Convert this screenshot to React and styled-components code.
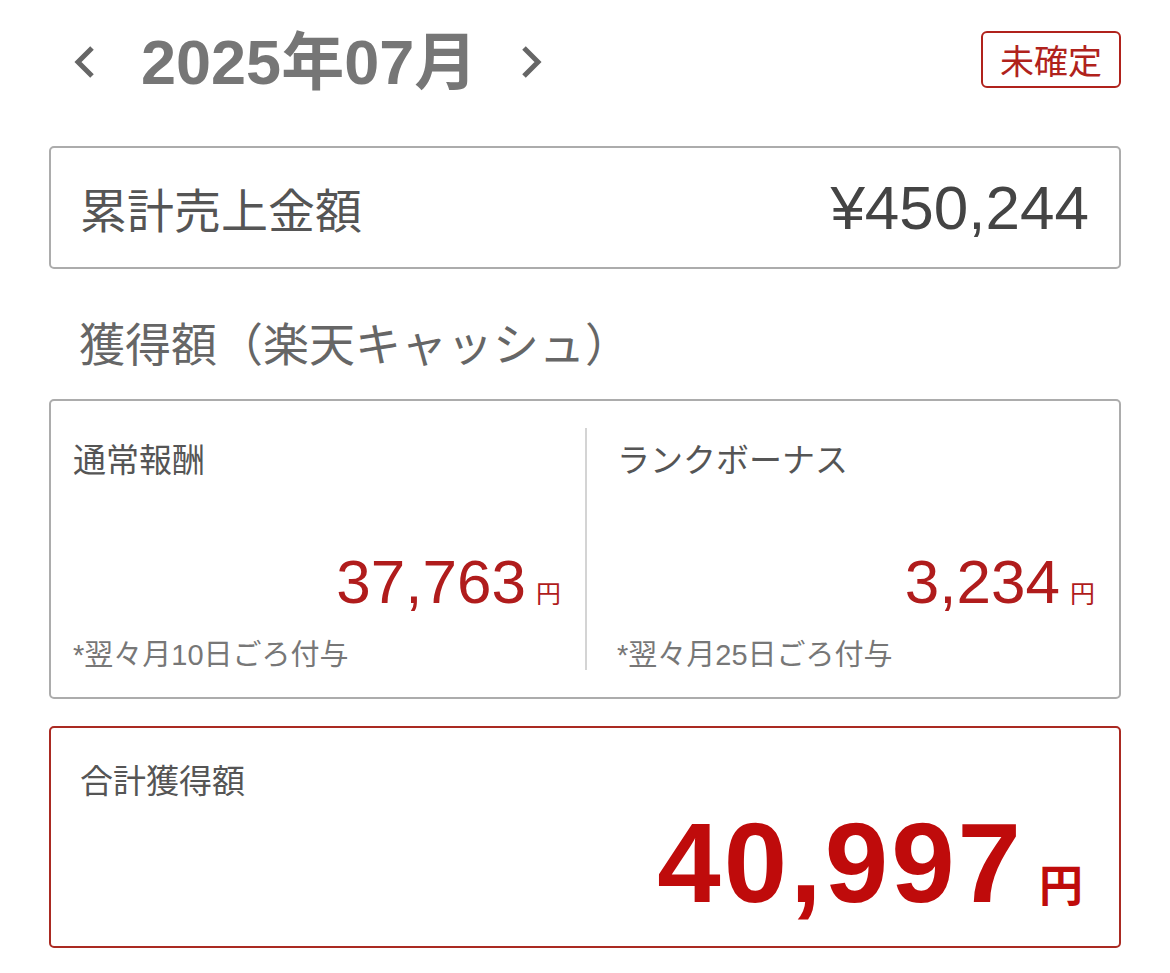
import styled, { createGlobalStyle } from "styled-components";

const GlobalStyle = createGlobalStyle`
  body {
    margin: 0;
    background: #fff;
    font-family: "Liberation Sans", "Noto Sans CJK JP", sans-serif;
  }
`;

const Page = styled.div`
  width: 1170px;
  padding: 0 49px;
  box-sizing: border-box;
`;

const Header = styled.div`
  display: flex;
  align-items: center;
  height: 57px;
  padding-top: 31px;
  padding-left: 24px;
`;

const Chevron = styled.button`
  display: flex;
  align-items: center;
  justify-content: center;
  background: none;
  border: 0;
  padding: 0;
  width: 24px;
  height: 36px;
  margin-top: 4px;
  cursor: pointer;
`;

const MonthTitle = styled.h1`
  margin: 6px 42px 0 44px;
  font-size: 63px;
  line-height: 1;
  font-weight: 700;
  color: #767676;
`;

const Badge = styled.div`
  margin-left: auto;
  width: 140px;
  height: 57px;
  box-sizing: border-box;
  border: 2px solid #b0221c;
  border-radius: 6px;
  display: flex;
  align-items: center;
  justify-content: center;
  color: #b0221c;
  font-size: 34px;
`;

const Card = styled.div`
  border: 2px solid ${(p) => (p.$accent ? "#aa2a22" : "#acacac")};
  border-radius: 5px;
  box-sizing: border-box;
`;

const SalesCard = styled(Card)`
  margin-top: 58px;
  height: 123px;
  display: flex;
  align-items: center;
  justify-content: space-between;
  padding: 0 30px 0 29px;
`;

const SalesLabel = styled.span`
  font-size: 47px;
  color: #555;
`;

const SalesValue = styled.span`
  font-size: 62px;
  color: #444;
`;

const SectionTitle = styled.h2`
  margin: 53px 0 31px 30px;
  font-size: 46px;
  line-height: 1;
  font-weight: 400;
  color: #666;
`;

const SplitCard = styled(Card)`
  height: 300px;
  display: grid;
  grid-template-columns: 534px 1fr;
  padding: 27px 0;
`;

const Column = styled.div`
  display: flex;
  flex-direction: column;
  padding: 0 ${(p) => p.$right}px 0 ${(p) => p.$left}px;
  border-left: ${(p) => (p.$divider ? "2px solid #d4d4d4" : "none")};
`;

const ItemLabel = styled.div`
  margin-top: ${(p) => (p.$flush ? 0 : 16)}px;
  font-size: 33px;
  line-height: 1;
  color: #555;
`;

const Amount = styled.div`
  margin-top: auto;
  display: flex;
  align-items: baseline;
  justify-content: flex-end;
  color: #b01c1c;
`;

const AmountNumber = styled.span`
  font-size: 62px;
  line-height: 1;
`;

const Yen = styled.span`
  font-size: 25px;
  line-height: 1;
  margin-left: 10px;
`;

const Note = styled.div`
  margin-top: 28px;
  font-size: 29px;
  line-height: 1;
  color: #777;
`;

const TotalCard = styled(Card)`
  margin-top: 27px;
  height: 222px;
  display: flex;
  flex-direction: column;
  padding: 37px 36px 26px 29px;
`;

const TotalNumber = styled.span`
  font-size: 114px;
  line-height: 1;
  font-weight: 700;
  letter-spacing: 3px;
  color: #bf0b0b;
`;

const TotalYen = styled.span`
  font-size: 44px;
  line-height: 1;
  font-weight: 700;
  color: #bf0b0b;
  margin-left: 15px;
`;

const ChevronIcon = ({ dir }) => (
  <svg width="24" height="36" viewBox="0 0 24 36">
    <polyline
      points={dir === "left" ? "19,4 5,18 19,32" : "5,4 19,18 5,32"}
      fill="none"
      stroke="#666"
      strokeWidth="5"
    />
  </svg>
);

const items = [
  { label: "通常報酬", amount: "37,763", note: "*翌々月10日ごろ付与", left: 22, right: 24 },
  { label: "ランクボーナス", amount: "3,234", note: "*翌々月25日ごろ付与", left: 30, right: 24 },
];

export default function App() {
  return (
    <Page>
      <GlobalStyle />
      <Header>
        <Chevron aria-label="前月">
          <ChevronIcon dir="left" />
        </Chevron>
        <MonthTitle>2025年07月</MonthTitle>
        <Chevron aria-label="翌月">
          <ChevronIcon dir="right" />
        </Chevron>
        <Badge>未確定</Badge>
      </Header>

      <SalesCard>
        <SalesLabel>累計売上金額</SalesLabel>
        <SalesValue>¥450,244</SalesValue>
      </SalesCard>

      <SectionTitle>獲得額（楽天キャッシュ）</SectionTitle>

      <SplitCard>
        {items.map((it, i) => (
          <Column key={it.label} $left={it.left} $right={it.right} $divider={i > 0}>
            <ItemLabel>{it.label}</ItemLabel>
            <Amount>
              <AmountNumber>{it.amount}</AmountNumber>
              <Yen>円</Yen>
            </Amount>
            <Note>{it.note}</Note>
          </Column>
        ))}
      </SplitCard>

      <TotalCard $accent>
        <ItemLabel $flush>合計獲得額</ItemLabel>
        <Amount>
          <TotalNumber>40,997</TotalNumber>
          <TotalYen>円</TotalYen>
        </Amount>
      </TotalCard>
    </Page>
  );
}
